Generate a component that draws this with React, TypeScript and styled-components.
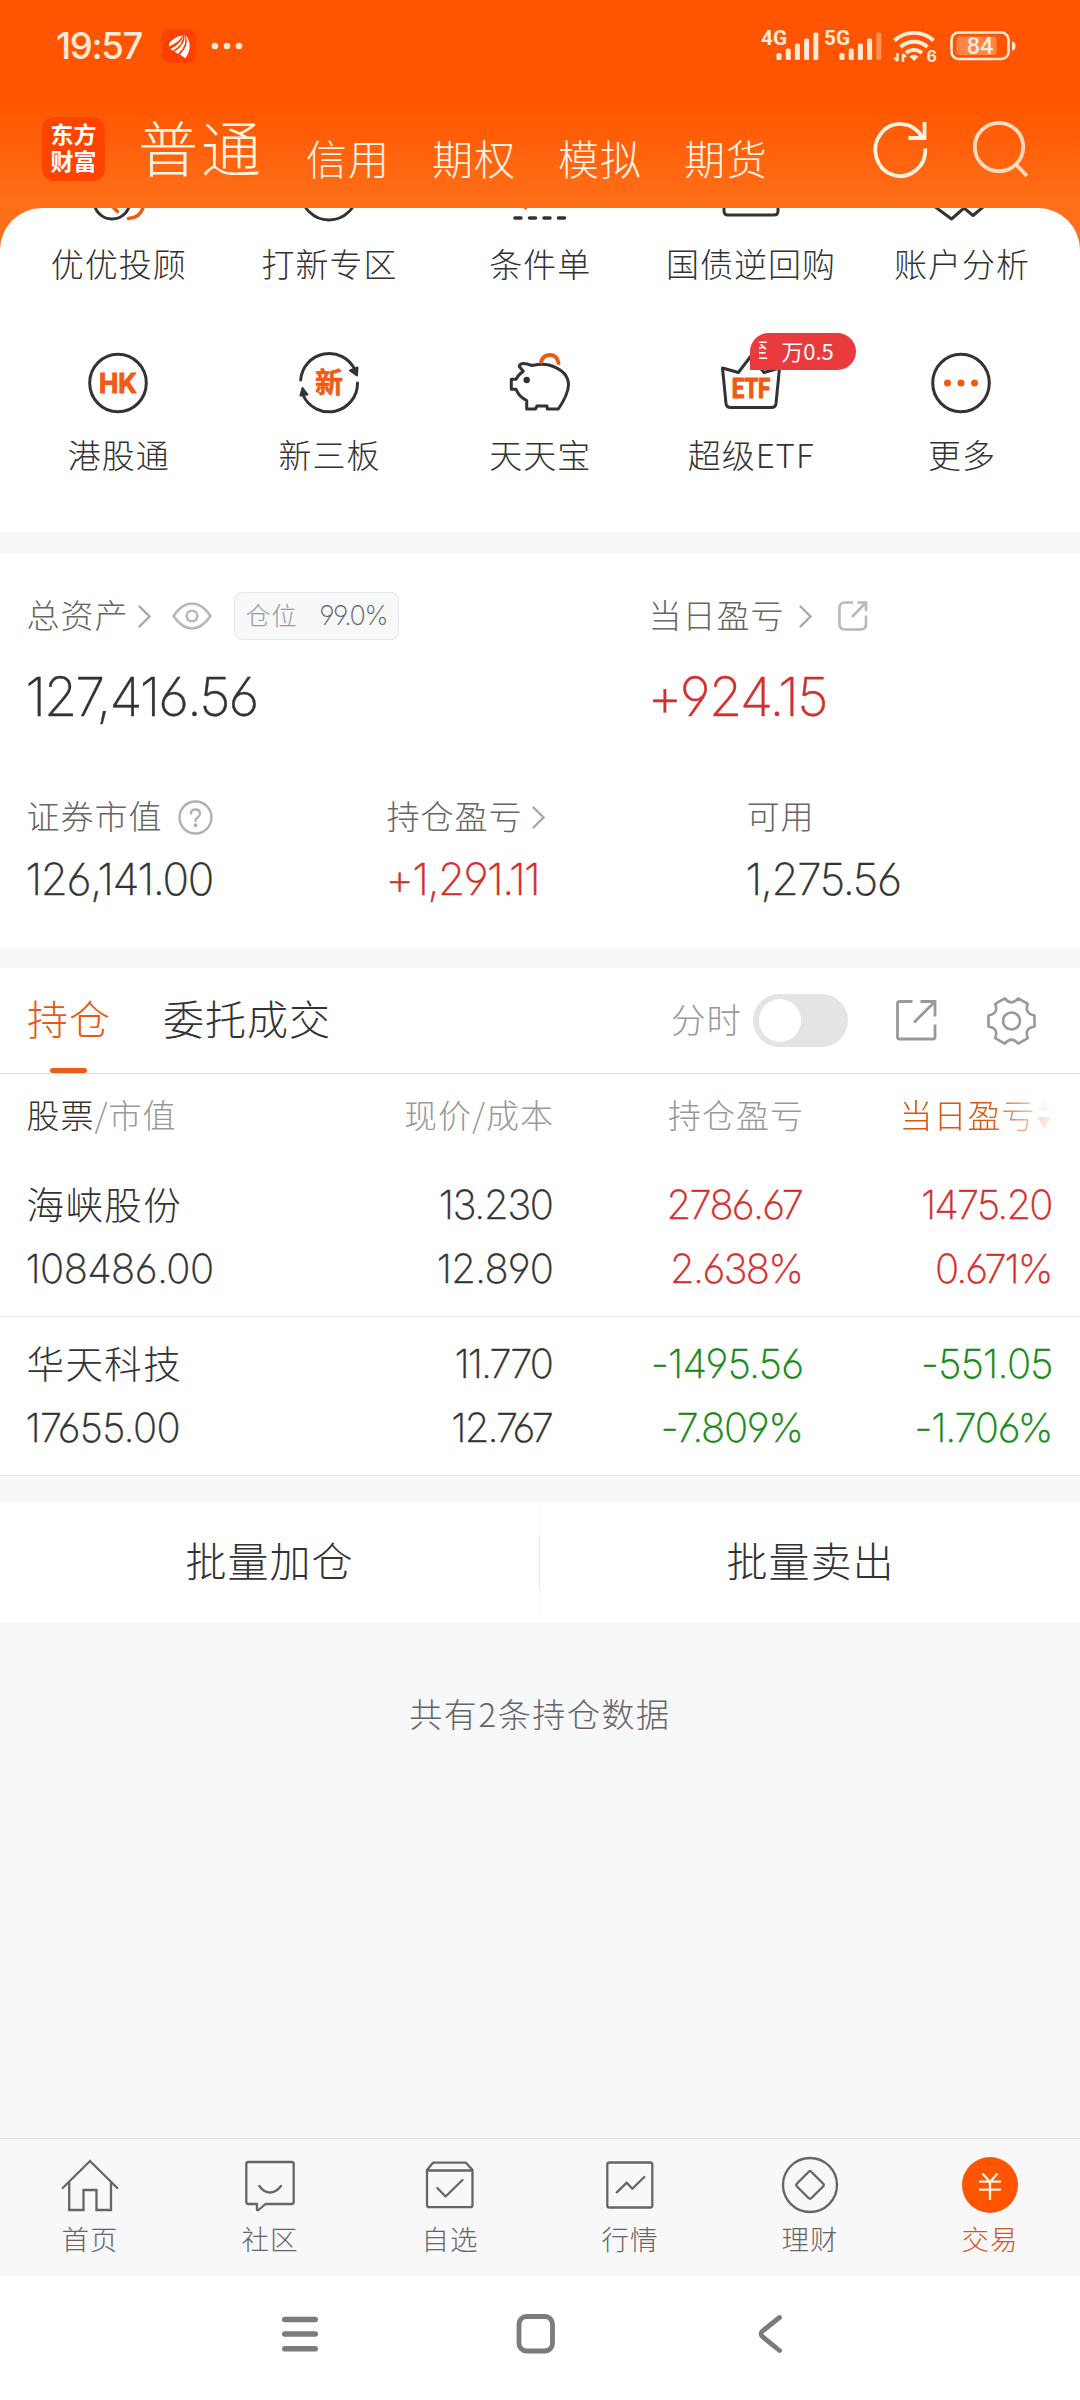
import React from "react";
import styled, { createGlobalStyle } from "styled-components";

const CJK = '"Noto Sans CJK SC", "Noto Sans", sans-serif';
const NUM = 'Inter, "Noto Sans CJK SC", sans-serif';

const ink = "#333333";
const mid = "#666666";
const soft = "#999999";
const red = "#d22f2d";
const green = "#168a18";
const orange = "#e85a14";
const cream = "#ffe9d8";
const band = "#f7f8fa";

const Global = createGlobalStyle`
  * { box-sizing: border-box; }
  body { margin: 0; background: #fff; }
  svg { display: block; flex: none; overflow: visible; }
`;

const Screen = styled.div`
  width: 1080px;
  height: 2400px;
  display: flex;
  flex-direction: column;
  font-family: ${CJK};
  font-weight: 300;
  color: ${ink};
  overflow: hidden;
  background: ${band};
`;

const Num = styled.span<{ $size?: number; $ls?: number; $color?: string }>`
  display: block;
  font-family: ${NUM};
  font-weight: 250;
  -webkit-text-stroke: ${(p) => ((p.$size ?? 40) < 30 ? 0.1 : 0.4)}px currentColor;
  font-feature-settings: "cv03", "cv04";
  font-size: ${(p) => p.$size ?? 40}px;
  letter-spacing: ${(p) => p.$ls ?? 0}px;
  margin-left: -1px;
  margin-right: ${(p) => -(p.$ls ?? 0)}px;
  color: ${(p) => p.$color ?? ink};
  white-space: nowrap;
`;

/* ---------- top ---------- */

const Top = styled.header`
  background: linear-gradient(#ff5500 0, #ff5500 100px, #ff6e18 200px, #ff6e18 100%);
  display: flex;
  flex-direction: column;
`;

const StatusBar = styled.div`
  height: 92px;
  padding: 0 64px 0 56px;
  display: flex;
  align-items: center;
  justify-content: space-between;
`;

const StatusSide = styled.div`
  display: flex;
  align-items: center;
`;

const Clock = styled.span`
  font-family: ${NUM};
  font-weight: 500;
  font-size: 36.5px;
  letter-spacing: -1.3px;
  line-height: 40px;
  color: ${cream};
  width: 106px;
`;

const Header = styled.div`
  height: 116px;
  padding: 0 50px 3px 42px;
  display: flex;
  align-items: center;
`;

const Logo = styled.div`
  width: 63px;
  height: 64px;
  border-radius: 12px;
  background: #ff4400;
  color: #fff;
  font-weight: 700;
  font-size: 23px;
  line-height: 27px;
  text-align: center;
  padding-top: 3px;
`;

const Markets = styled.nav`
  display: flex;
  gap: 42px;
  margin-left: 33px;
  flex: 1;
  color: #fff3e2;
`;

const Market = styled.span<{ $main?: boolean }>`
  font-size: ${(p) => (p.$main ? 60 : 41)}px;
  letter-spacing: ${(p) => (p.$main ? 3 : 1)}px;
  line-height: 60px;
  margin-top: ${(p) => (p.$main ? 0 : 11)}px;
  margin-bottom: ${(p) => (p.$main ? 0 : -5)}px;
`;

const HeaderIcons = styled.div`
  display: flex;
  gap: 44px;
`;

/* ---------- shortcuts ---------- */

const Shortcuts = styled.section`
  background: #fff;
  border-radius: 42px 42px 0 0;
  height: 324px;
  padding: 0 12px 0 12.8px;
  display: grid;
  grid-template-columns: repeat(5, 210.8px);
  grid-template-rows: 75px 1fr;
  row-gap: 60px;
  overflow: hidden;
`;

const Shortcut = styled.div<{ $gap: number }>`
  position: relative;
  display: flex;
  flex-direction: column;
  align-items: center;
  gap: ${(p) => p.$gap}px;
`;

const ShortcutName = styled.span`
  font-size: 33px;
  letter-spacing: 1px;
  margin-right: -1px;
  line-height: 40px;
  white-space: nowrap;
`;

const Promo = styled.div`
  position: absolute;
  left: 105px;
  top: -10px;
  width: 106px;
  height: 37px;
  border-radius: 19px 19px 19px 0;
  background: #e93a3c;
  color: #fff;
  font-weight: 400;
  font-size: 22px;
  line-height: 34px;
  display: flex;
  padding-left: 9px;
`;

const PromoTail = styled.span`
  width: 9px;
  height: 37px;
  margin-right: 13px;
  overflow: hidden;
  display: flex;
  justify-content: flex-end;
  font-size: 20px;
`;

/* ---------- assets ---------- */

const Gap = styled.div<{ $h: number }>`
  height: ${(p) => p.$h}px;
  background: ${band};
`;

const Assets = styled.section`
  height: 394px;
  background: #fff;
  padding: 39px 27px 0 26.5px;
`;

const AssetTop = styled.div`
  display: grid;
  grid-template-columns: 622px 1fr;
`;

const AssetBottom = styled.div`
  display: grid;
  grid-template-columns: 360px 360px 1fr;
  margin-top: 70px;
`;

const Metric = styled.div<{ $gap: number; $line: number }>`
  display: flex;
  flex-direction: column;
  gap: ${(p) => p.$gap}px;
  line-height: ${(p) => p.$line}px;
`;

const MetricHead = styled.div<{ $h: number }>`
  height: ${(p) => p.$h}px;
  display: flex;
  align-items: center;
`;

const MetricName = styled.span`
  font-size: 33px;
  letter-spacing: 1px;
  line-height: 34px;
  padding-bottom: 5px;
  color: ${mid};
`;

const Spacer = styled.i<{ $w: number }>`
  width: ${(p) => p.$w}px;
  flex: none;
`;

const Ratio = styled.div`
  width: 165px;
  height: 48px;
  border: 1px solid #e4e5e8;
  border-radius: 8px;
  background: ${band};
  display: flex;
  align-items: center;
  justify-content: space-between;
  padding: 0 9px 0 11px;
  line-height: 40px;
`;

const RatioName = styled.span`
  font-size: 25px;
  letter-spacing: 1px;
  padding-bottom: 4px;
  color: ${soft};
`;

/* ---------- holdings ---------- */

const Tabs = styled.div`
  height: 106px;
  background: #fff;
  border-bottom: 1px solid #dcdcdc;
  padding: 0 44px 0 27px;
  display: flex;
  align-items: center;
`;

const Tab = styled.div<{ $on?: boolean }>`
  position: relative;
  height: 105px;
  line-height: 99px;
  font-size: 41px;
  letter-spacing: 1px;
  margin-right: 52px;
  color: ${(p) => (p.$on ? orange : ink)};
  &::after {
    content: "";
    display: ${(p) => (p.$on ? "block" : "none")};
    position: absolute;
    left: 23px;
    bottom: 0;
    width: 37px;
    height: 5px;
    border-radius: 3px;
    background: #e95c14;
  }
`;

const SwitchName = styled.span`
  margin-left: auto;
  font-size: 34.5px;
  letter-spacing: 1px;
  padding-bottom: 6px;
  line-height: 40px;
  color: ${soft};
`;

const Switch = styled.div`
  width: 95px;
  height: 53px;
  border-radius: 27px;
  background: #e4e4e6;
  margin: 0 48px 0 11px;
  padding: 5px 6px;
`;

const Knob = styled.div`
  width: 42px;
  height: 43px;
  border-radius: 50%;
  background: #fff;
`;

const Row = styled.div`
  display: grid;
  grid-template-columns: 277.5px 250px 250px 249.5px;
  padding-left: 26.5px;
  height: 159px;
  padding-top: 22px;
  background: #fff;
  border-bottom: 1px solid #e9e9eb;
`;

const HeadRow = styled(Row)`
  height: 84px;
  padding-top: 19px;
  border: 0;
  font-size: 33px;
  letter-spacing: 1px;
  line-height: 42px;
  color: ${soft};
`;

const Cell = styled.div<{ $left?: boolean }>`
  display: flex;
  flex-direction: column;
  align-items: ${(p) => (p.$left ? "flex-start" : "flex-end")};
  gap: 14px;
  line-height: 50px;
`;

const HeadCell = styled.div<{ $left?: boolean }>`
  text-align: ${(p) => (p.$left ? "left" : "right")};
  white-space: nowrap;
  b { font-weight: 300; color: ${ink}; }
`;

const SortCell = styled.div`
  display: flex;
  justify-content: flex-end;
  align-items: center;
  height: 42px;
  gap: 1px;
  padding-right: 2px;
  color: #d9560f;
  -webkit-mask-image: linear-gradient(to right, #000 74%, rgba(0, 0, 0, 0.1) 98%);
  mask-image: linear-gradient(to right, #000 74%, rgba(0, 0, 0, 0.1) 98%);
`;

const StockName = styled.span`
  font-size: 37.5px;
  letter-spacing: 1.4px;
  line-height: 46px;
  padding-bottom: 4px;
`;

/* ---------- actions ---------- */

const Actions = styled.div`
  height: 121px;
  background: #fff;
  display: grid;
  grid-template-columns: 539px 2px 539px;
  align-items: center;
`;

const Action = styled.div`
  text-align: center;
  font-size: 41px;
  letter-spacing: 1px;
  line-height: 60px;
  padding-bottom: 7px;
`;

const ActionRule = styled.i`
  width: 1px;
  height: 121px;
  background: linear-gradient(#f8f9fa 34px, #e9e9ec 34px, #e9e9ec 87px, #f8f9fa 87px);
`;

const Summary = styled.p`
  margin: 70px 0 0;
  text-align: center;
  font-size: 33px;
  letter-spacing: 1.6px;
  line-height: 40px;
  color: ${mid};
  flex: 1;
`;

/* ---------- bottom ---------- */

const TabBar = styled.nav`
  height: 138px;
  border-top: 1px solid #e2e2e5;
  background: #f8f8fb;
  display: grid;
  grid-template-columns: repeat(6, 180px);
`;

const TabItem = styled.div<{ $on?: boolean }>`
  display: flex;
  flex-direction: column;
  align-items: center;
  gap: 8px;
  padding-top: 16px;
  font-size: 27.5px;
  letter-spacing: 1px;
  line-height: 30px;
  color: ${(p) => (p.$on ? "#d9541a" : mid)};
`;

const SystemNav = styled.div`
  height: 124px;
  background: #fff;
  display: flex;
  padding: 37px 0 0 282px;
`;

/* ---------- drawings ---------- */

const Signal = ({ label, dim }: { label: string; dim?: boolean }) => (
  <svg width="58" height="34" viewBox="0 0 58 34" fill={cream}>
    <text x="0" y="16" fontFamily="Roboto" fontWeight="700" fontSize="20.5" textLength="26" lengthAdjust="spacingAndGlyphs">{label}</text>
    {[7, 11.5, 16.5, 21.5, 27.5].map((h, i) => (
      <rect key={h} x={15.5 + i * 9.2} y={31 - h} width="5" height={h} rx="1.6" opacity={dim && i === 4 ? 0.4 : 1} />
    ))}
  </svg>
);

const Wifi = () => (
  <svg width="44" height="34" viewBox="0 0 44 34" fill="none" stroke={cream} strokeWidth="3.8">
    <path d="M1.5 11.5A28.5 28.5 0 0 1 40.5 11.5" />
    <path d="M7.5 18A20 20 0 0 1 34.5 18" />
    <path d="M13 24A12 12 0 0 1 29 24" />
    <path d="M16.5 27.5Q21 24 25.5 27.5L21 32Z" fill={cream} stroke="none" />
    <path d="M4.5 24v8M1 28.5l3.5 3.5M10 33v-8M10 25l3 3" strokeWidth="2.4" />
    <text x="33.5" y="33" fill={cream} stroke="none" fontFamily="Inter" fontWeight="700" fontSize="16">6</text>
  </svg>
);

const Battery = () => (
  <svg width="66" height="30" viewBox="0 0 66 30">
    <rect x="1.5" y="1.5" width="57" height="26.5" rx="7" fill="none" stroke={cream} strokeWidth="2.6" />
    <rect x="6.5" y="5.5" width="40" height="18.5" rx="3" fill="#ff8445" />
    <path d="M62 10.5v9q3.5 0 3.5-4.5t-3.5-4.5z" fill={cream} />
    <text x="30" y="23" textAnchor="middle" fill={cream} fontFamily="Roboto" fontWeight="500" fontSize="23.5">84</text>
  </svg>
);

const AppMark = () => (
  <svg width="34" height="34" viewBox="0 0 34 34">
    <rect width="34" height="34" rx="8" fill="#ff4000" />
    <g fill="#fff">
      <path d="M7 14.5Q12 8 20.5 6.5Q18 12.5 7 17.5Z" />
      <path d="M21.3 5.5Q20.5 14 8.5 20L11 21.8Q21.5 15.5 21.3 5.5Z" />
      <path d="M22.3 5Q24.5 15 12.5 22.8L16 24.8Q26.5 15.5 22.3 5Z" />
      <path d="M23.5 6Q28 15.5 18 25.5L23.3 29.3Q32 16.5 23.5 6Z" />
    </g>
  </svg>
);

const Dots = () => (
  <svg width="32" height="8" viewBox="0 0 32 8" fill={cream}>
    <circle cx="4" cy="4" r="3.3" /><circle cx="16" cy="4" r="3.3" /><circle cx="28" cy="4" r="3.3" />
  </svg>
);

const Refresh = () => (
  <svg width="56" height="58" viewBox="0 0 56 58" fill="none" stroke="#fff3e2" strokeWidth="3.8">
    <path d="M52.3 28.5A25 26 0 1 1 49 17" />
    <path d="M51.5 2v16H35.5" />
  </svg>
);

const Search = () => (
  <svg width="57" height="58" viewBox="0 0 57 58" fill="none" stroke="#ffdcc0" strokeWidth="3.8">
    <circle cx="26" cy="27" r="24.2" />
    <path d="M43 44.5L54 56" />
  </svg>
);

const CutIcon = ({ children }: { children: React.ReactNode }) => (
  <svg width="70" height="30" viewBox="-35 0 70 30" fill="none" stroke={ink} strokeWidth="3" strokeLinejoin="round">{children}</svg>
);

const cutIcons: Record<string, React.ReactNode> = {
  advisor: (<><circle cx="-6" cy="-7" r="18" /><path d="M-6 -2l5.5 5.5" stroke="#ea5b14" strokeWidth="3.5" strokeLinecap="round" /><path d="M25.5 -2Q22.5 10 10.5 10.5" stroke="#ea5b14" strokeWidth="3.5" strokeLinecap="round" /></>),
  ipo: <circle cx="0" cy="-16" r="28" />,
  order: (<><path d="M-25 10h6M-10.5 10h6M4 10h6M18.5 10h6" strokeWidth="3.6" strokeLinecap="round" /><circle cx="-14.5" cy="0" r="1.5" fill="#ea5b14" stroke="none" /></>),
  bond: <path d="M-27 -6V3q0 4 4 4H23q4 0 4-4V-6" />,
  analysis: <path d="M-27 -2L-9.5 11L3 0L12 7.5L22 -1" />,
};

const RoundIcon = ({ children }: { children: React.ReactNode }) => (
  <svg width="80" height="80" viewBox="-40 -40 80 80" fill="none" stroke={ink} strokeWidth="3" strokeLinejoin="round">{children}</svg>
);

const glyph = { fill: "#f25a14", stroke: "#f25a14", textAnchor: "middle" as const };

const roundIcons: Record<string, React.ReactNode> = {
  hk: (<><ellipse cx="0" cy="0" rx="28.3" ry="28.8" /><text {...glyph} x="0" y="10" fontFamily="Inter" fontWeight="700" fontSize="27.5" strokeWidth="1" textLength="38" lengthAdjust="spacingAndGlyphs">HK</text></>),
  neeq: (<><path d="M-28.3 -3A28.5 28.5 0 0 1 26 -13M28.5 0A28.5 28.5 0 0 1 -26 12" strokeLinecap="round" /><path d="M21 -12.5L28.5 -15.5L28 -7.5Z" fill={ink} strokeWidth="2" /><path d="M-21.5 11.5L-28.5 12.5L-26.5 5Z" fill={ink} strokeWidth="2" /><text {...glyph} x="0" y="10" fontFamily="Noto Sans CJK SC" fontWeight="700" fontSize="28" strokeWidth="0.6">新</text></>),
  piggy: (<><path d="M-28.7 -3.7H-24Q-22 -8 -16.7 -11.7L-20.7 -16.5Q-20 -22 -8 -17.5Q5 -20 12 -17Q28.5 -11 28.5 2Q28 12 18.3 26H7.3L7 23H-3L-4.5 26H-13.3V17.5Q-21 14 -24 6.3H-28.7Z" /><circle cx="-13.3" cy="-3" r="3.2" fill={ink} stroke="none" /><path d="M1 -21Q3 -28 10 -28Q17 -28 18.5 -20" stroke="#f25a14" strokeWidth="4" strokeLinecap="round" /></>),
  etf: (<><path d="M-28.5 -15L-12.7 -10.5L0 -27L13 -10.5L28.5 -15L25 20.5Q24.5 24.5 20.5 24.5H-20.5Q-24.5 24.5 -25 20.5Z" /><text {...glyph} x="0" y="15" fontFamily="Roboto" fontWeight="700" fontSize="27" strokeWidth="1.2" textLength="38.5" lengthAdjust="spacingAndGlyphs">ETF</text></>),
  more: (<><ellipse cx="0" cy="0" rx="28.3" ry="28.8" /><g fill="#f25a14" stroke="none"><circle cx="-13.5" cy="0" r="3.5" /><circle cx="0" cy="0" r="3.5" /><circle cx="13.5" cy="0" r="3.5" /></g></>),
};

const Chevron = () => (
  <svg width="13" height="23" viewBox="0 0 13 23" fill="none" stroke="#a8a8a8" strokeWidth="2.4" strokeLinecap="round"><path d="M1.5 1.5L11.5 11.5L1.5 21.5" /></svg>
);

const Eye = () => (
  <svg width="40" height="28" viewBox="0 0 40 28" fill="none" stroke="#b8b8b8" strokeWidth="2.6" strokeLinejoin="round">
    <path d="M1.5 14Q10 1.5 20 1.5T38.5 14Q30 26.5 20 26.5T1.5 14Z" /><circle cx="20" cy="14" r="5.3" />
  </svg>
);

const Help = () => (
  <svg width="35" height="35" viewBox="0 0 35 35" fill="none" stroke="#b0b0b0" strokeWidth="2.3" strokeLinecap="round">
    <circle cx="17.5" cy="17.5" r="16" /><path d="M13 13.5Q13 9.5 17.5 9.5T22 13.5Q22 16 19.5 17.5Q17.5 18.5 17.5 21" /><circle cx="17.5" cy="25.3" r="0.9" />
  </svg>
);

const ShareSmall = () => (
  <svg width="30" height="30" viewBox="0 0 30 30" fill="none" stroke="#b8b8b8" strokeWidth="2.6">
    <path d="M15 1.5H7Q1.5 1.5 1.5 7V23Q1.5 28.5 7 28.5H22.5Q28 28.5 28 23V14.5M19.5 1.5H28V10M28 1.5L14 16" />
  </svg>
);

const Share = () => (
  <svg width="41" height="41" viewBox="0 0 41 41" fill="none" stroke="#999" strokeWidth="2.8">
    <path d="M16.5 1.5H3.5Q1.5 1.5 1.5 3.5V37Q1.5 39 3.5 39H37Q39 39 39 37V24.5M24.5 1.5H39V16.5M39 1.5L18 22.5" />
  </svg>
);

const gearPath = (() => {
  const at = (x: number, y: number, deg: number) => {
    const a = (deg * Math.PI) / 180;
    return `${(x * Math.cos(a) - y * Math.sin(a)).toFixed(2)} ${(x * Math.sin(a) + y * Math.cos(a)).toFixed(2)}`;
  };
  let d = `M${at(23, -5.5, 0)}`;
  for (let k = 0; k < 6; k++) d += `L${at(23, 5.5, k * 60)}Q${at(14.5, 0, k * 60 + 30)} ${at(23, -5.5, k * 60 + 60)}`;
  return d + "Z";
})();

const Gear = () => (
  <svg width="49" height="48" viewBox="-24.5 -24 49 48" fill="none" stroke="#999" strokeWidth="2.6" strokeLinejoin="round"><path d={gearPath} /><circle cx="0" cy="0" r="8.5" /></svg>
);

const SortMark = () => (
  <svg width="15" height="32" viewBox="0 0 15 32"><path d="M7.5 1L14.5 13H0.5Z" fill="#ddd" /><path d="M7.5 31L14.5 19H0.5Z" fill="#ef6a2a" /></svg>
);

const NavIcon = ({ children }: { children: React.ReactNode }) => (
  <svg width="60" height="60" viewBox="-30 -30 60 60" fill="none" stroke={mid} strokeWidth="2.3" strokeLinejoin="round" strokeLinecap="round">{children}</svg>
);

const tabItems: { name: string; on?: boolean; icon: React.ReactNode }[] = [
  { name: "首页", icon: <path d="M-27.3 3L0 -24L27.3 3M-20.8 -2.5V25H-6.5V5H6.5V25H21V-2.5" strokeLinejoin="miter" /> },
  { name: "社区", icon: (<><path d="M-21.5 -23H21.5Q23.7 -23 23.7 -21V17Q23.7 19 21.5 19H-4.5L-11.5 25H-13V19H-21.5Q-23.7 19 -23.7 17V-21Q-23.7 -23 -21.5 -23Z" /><path d="M-10.7 1Q-6 7.5 0 7.5T11 1" /></>) },
  { name: "自选", icon: (<><path d="M-23 -15L-17 -22.3H16L22.5 -15V20Q22.5 22.2 20.5 22.2H-21Q-23 22.2 -23 20ZM-23 -14.5H22.5" /><path d="M-12.7 3L-4.4 11.5L12.5 -5" /></>) },
  { name: "行情", icon: (<><rect x="-22.7" y="-22.5" width="45" height="45" rx="2" /><path d="M-13.2 7.3L-3.2 -2.3L2.3 3.7L14.3 -8" /></>) },
  { name: "理财", icon: (<><circle cx="0" cy="0" r="27" /><path d="M-1.5 -13Q0 -14.5 1.5 -13L13 -1.5Q14.5 0 13 1.5L1.5 13Q0 14.5 -1.5 13L-13 1.5Q-14.5 0 -13 -1.5Z" /></>) },
  { name: "交易", on: true, icon: (<><circle cx="0" cy="0" r="28" fill="#ff5500" stroke="none" /><path d="M-7.5 -11.5L0 -3L7.5 -11.5M0 -3V15M-11 -3.3H11M-11 4.7H11" stroke="#fff3e2" strokeLinecap="butt" /></>) },
];

/* ---------- data ---------- */

const upper = [["优优投顾", "advisor"], ["打新专区", "ipo"], ["条件单", "order"], ["国债逆回购", "bond"], ["账户分析", "analysis"]];
const lower = [["港股通", "hk"], ["新三板", "neeq"], ["天天宝", "piggy"], ["超级ETF", "etf"], ["更多", "more"]];

type Fig = [string, number];
const holdings: { name: string; value: Fig; color: string; cols: [Fig, Fig][] }[] = [
  { name: "海峡股份", value: ["108486.00", -0.6], color: red, cols: [[["13.230", -1.3], ["12.890", -0.8]], [["2786.67", -1.7], ["2.638%", -1.6]], [["1475.20", -1.8], ["0.671%", -2]]] },
  { name: "华天科技", value: ["17655.00", -0.7], color: green, cols: [[["11.770", -2], ["12.767", -1.9]], [["-1495.56", -0.7], ["-7.809%", -1.3]], [["-551.05", -0.7], ["-1.706%", -1.2]]] },
];

export default function App() {
  return (
    <Screen>
      <Global />
      <Top>
        <StatusBar>
          <StatusSide>
            <Clock>19:57</Clock>
            <AppMark />
            <Spacer $w={15} />
            <Dots />
          </StatusSide>
          <StatusSide>
            <Signal label="4G" />
            <Spacer $w={5} />
            <Signal label="5G" dim />
            <Spacer $w={11} />
            <Wifi />
            <Spacer $w={13} />
            <Battery />
          </StatusSide>
        </StatusBar>
        <Header>
          <Logo>东方<br />财富</Logo>
          <Markets>
            <Market $main>普通</Market>
            {["信用", "期权", "模拟", "期货"].map((m) => <Market key={m}>{m}</Market>)}
          </Markets>
          <HeaderIcons><Refresh /><Search /></HeaderIcons>
        </Header>
        <Shortcuts>
          {upper.map(([name, icon]) => (
            <Shortcut key={name} $gap={5}><CutIcon>{cutIcons[icon]}</CutIcon><ShortcutName>{name}</ShortcutName></Shortcut>
          ))}
          {lower.map(([name, icon]) => (
            <Shortcut key={name} $gap={11}>
              <RoundIcon>{roundIcons[icon]}</RoundIcon>
              <ShortcutName>{name}</ShortcutName>
              {icon === "etf" && <Promo><PromoTail>至</PromoTail>万0.5</Promo>}
            </Shortcut>
          ))}
        </Shortcuts>
      </Top>

      <Gap $h={21} />

      <Assets>
        <AssetTop>
          <Metric $gap={27} $line={60}>
            <MetricHead $h={48}>
              <MetricName>总资产</MetricName>
              <Spacer $w={9} /><Chevron /><Spacer $w={21} /><Eye /><Spacer $w={22} />
              <Ratio><RatioName>仓位</RatioName><Num $size={27} $ls={-1.5} $color={mid}>99.0%</Num></Ratio>
            </MetricHead>
            <Num $size={54} $ls={-2}>127,416.56</Num>
          </Metric>
          <Metric $gap={27} $line={60}>
            <MetricHead $h={48}>
              <MetricName>当日盈亏</MetricName>
              <Spacer $w={14} /><Chevron /><Spacer $w={26} /><ShareSmall />
            </MetricHead>
            <Num $size={54} $ls={-1.6} $color={red}>+924.15</Num>
          </Metric>
        </AssetTop>
        <AssetBottom>
          <Metric $gap={17} $line={50}>
            <MetricHead $h={40}><MetricName>证券市值</MetricName><Spacer $w={15} /><Help /></MetricHead>
            <Num $size={44} $ls={-1.4}>126,141.00</Num>
          </Metric>
          <Metric $gap={17} $line={50}>
            <MetricHead $h={40}><MetricName>持仓盈亏</MetricName><Spacer $w={9} /><Chevron /></MetricHead>
            <Num $size={44} $ls={-1.6} $color={red}>+1,291.11</Num>
          </Metric>
          <Metric $gap={17} $line={50}>
            <MetricHead $h={40}><MetricName>可用</MetricName></MetricHead>
            <Num $size={44} $ls={-1.4}>1,275.56</Num>
          </Metric>
        </AssetBottom>
      </Assets>

      <Gap $h={21} />

      <Tabs>
        <Tab $on>持仓</Tab>
        <Tab>委托成交</Tab>
        <SwitchName>分时</SwitchName>
        <Switch><Knob /></Switch>
        <Share />
        <Spacer $w={50} />
        <Gear />
      </Tabs>

      <HeadRow>
        <HeadCell $left><b>股票</b>/市值</HeadCell>
        <HeadCell>现价/成本</HeadCell>
        <HeadCell>持仓盈亏</HeadCell>
        <SortCell>当日盈亏<SortMark /></SortCell>
      </HeadRow>
      {holdings.map((h) => (
        <Row key={h.name}>
          <Cell $left><StockName>{h.name}</StockName><Num $ls={h.value[1]}>{h.value[0]}</Num></Cell>
          {h.cols.map((pair, i) => (
            <Cell key={i}>
              {pair.map(([t, ls]) => <Num key={t} $ls={ls} $color={i ? h.color : ink}>{t}</Num>)}
            </Cell>
          ))}
        </Row>
      ))}

      <Gap $h={26} />
      <Actions><Action>批量加仓</Action><ActionRule /><Action>批量卖出</Action></Actions>
      <Summary>共有2条持仓数据</Summary>

      <TabBar>
        {tabItems.map((t) => <TabItem key={t.name} $on={t.on}><NavIcon>{t.icon}</NavIcon>{t.name}</TabItem>)}
      </TabBar>
      <SystemNav>
        <svg width="36" height="42" viewBox="0 0 36 42" stroke="#7b7b7b" strokeWidth="5.4" strokeLinecap="round"><path d="M2.7 6.5H33.3M2.7 21H33.3M2.7 35.7H33.3" /></svg>
        <Spacer $w={198} />
        <svg width="40" height="42" viewBox="0 0 40 42" fill="none" stroke="#7b7b7b" strokeWidth="4.8"><rect x="3" y="3.5" width="33.5" height="34.5" rx="7.5" /></svg>
        <Spacer $w={202} />
        <svg width="24" height="42" viewBox="0 0 24 42" fill="none" stroke="#7b7b7b" strokeWidth="4.8" strokeLinecap="round"><path d="M21.5 4.5L4.5 18Q1.5 20.8 4.5 23.7L21.5 37.5" /></svg>
      </SystemNav>
    </Screen>
  );
}
